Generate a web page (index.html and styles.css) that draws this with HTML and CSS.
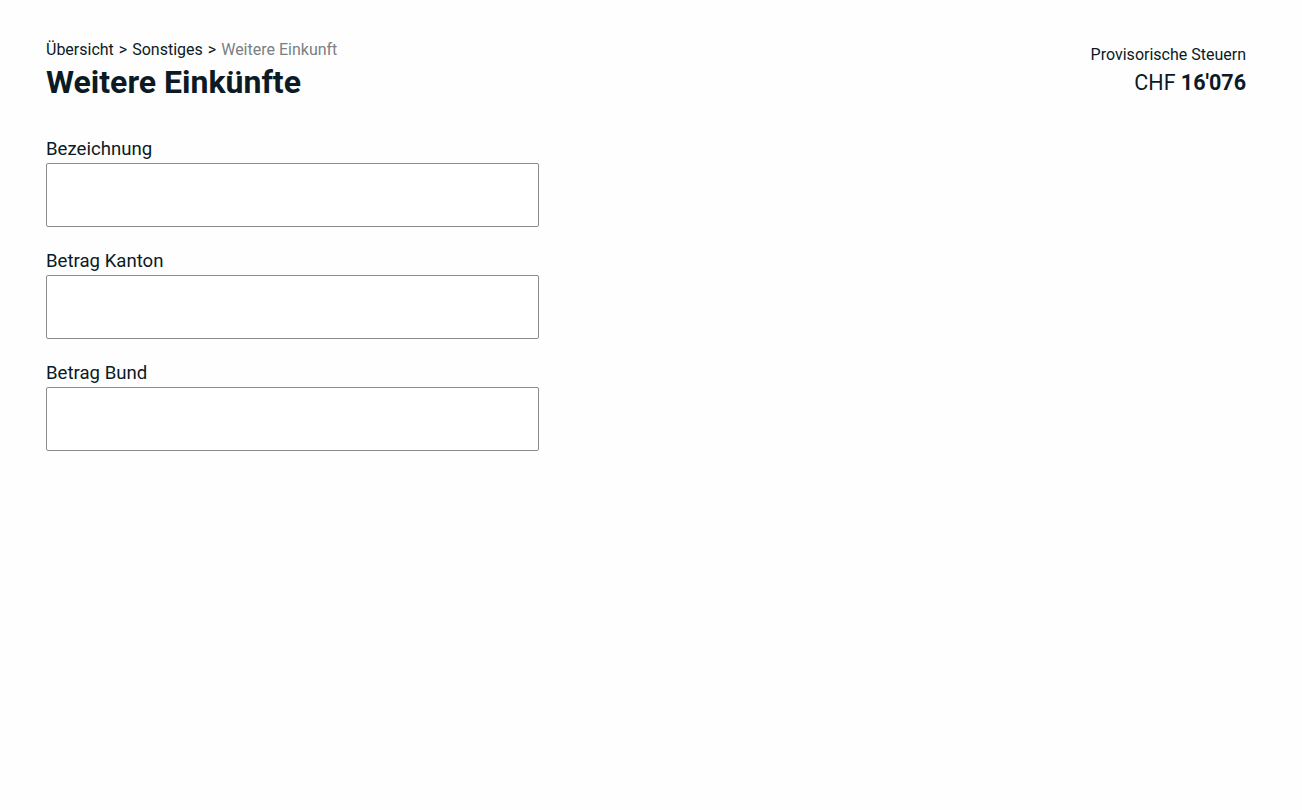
FILE: index.html
```html
<!DOCTYPE html>
<html lang="de">
<head>
<meta charset="utf-8">
<title>Weitere Einkünfte</title>
<link rel="stylesheet" href="styles.css">
</head>
<body>
<main class="page">
  <header class="header">
    <div class="header-left">
      <nav class="breadcrumb">
        <span class="crumb">Übersicht</span>
        <span class="sep">&gt;</span>
        <span class="crumb">Sonstiges</span>
        <span class="sep">&gt;</span>
        <span class="crumb current">Weitere Einkunft</span>
      </nav>
      <h1 class="title">Weitere Einkünfte</h1>
    </div>
    <div class="header-right">
      <div class="tax-label">Provisorische Steuern</div>
      <div class="tax-value">CHF <strong>16'076</strong></div>
    </div>
  </header>
  <form class="form">
    <label class="field">
      <span class="field-label">Bezeichnung</span>
      <input class="field-input" type="text">
    </label>
    <label class="field">
      <span class="field-label">Betrag Kanton</span>
      <input class="field-input" type="text">
    </label>
    <label class="field">
      <span class="field-label">Betrag Bund</span>
      <input class="field-input" type="text">
    </label>
  </form>
</main>
</body>
</html>
```

FILE: styles.css
```css
html, body {
  margin: 0;
  padding: 0;
  background: #fefefe;
}
body {
  font-family: Roboto, "Liberation Sans", sans-serif;
  color: #0b1a24;
}
.page {
  padding: 41px 56px 0 46px;
}
.header {
  display: flex;
  justify-content: space-between;
  align-items: flex-start;
}
.breadcrumb {
  font-size: 16px;
  line-height: 18px;
  display: flex;
  gap: 5px;
  color: #0b1a24;
}
.crumb.current {
  color: #7a7f84;
}
.title {
  margin: 4px 0 0;
  font-size: 32px;
  line-height: 38px;
  font-weight: 700;
  color: #0b1a24;
}
.header-right {
  text-align: right;
  padding-top: 5px;
}
.tax-label {
  font-size: 16px;
  line-height: 18px;
}
.tax-value {
  margin-top: 6px;
  font-size: 21.5px;
  line-height: 26px;
}
.tax-value strong {
  font-weight: 700;
}
.form {
  margin-top: 37px;
  display: flex;
  flex-direction: column;
  gap: 23px;
  width: 493px;
}
.field {
  display: flex;
  flex-direction: column;
  gap: 3px;
}
.field-label {
  font-size: 18.6px;
  line-height: 22px;
}
.field-input {
  box-sizing: border-box;
  height: 64px;
  width: 100%;
  margin: 0;
  border: 1px solid #8c8c8c;
  border-radius: 2px;
  background: #fff;
  font: inherit;
  padding: 0 12px;
}
```
